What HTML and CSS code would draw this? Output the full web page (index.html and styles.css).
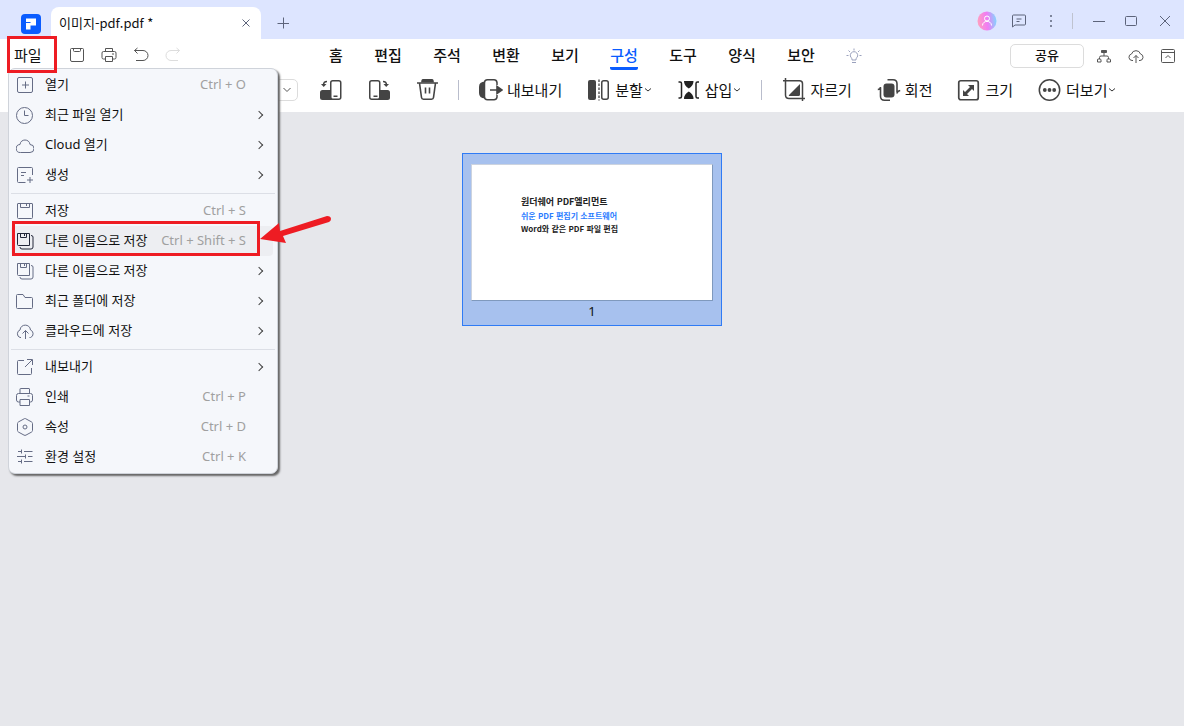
FILE: index.html
```html
<!DOCTYPE html>
<html lang="ko">
<head>
<meta charset="utf-8">
<title>이미지-pdf.pdf</title>
<link rel="stylesheet" href="styles.css">
</head>
<body>
<header class="titlebar">
  <svg class="logo" viewBox="0 0 20 20"><rect width="20" height="20" rx="4" fill="#0a5cff"/><path d="M5 4.500h10v7h-5.500V15.500H5V9h4.500V8H5z" fill="#fff"/></svg>
  <div class="doc-tab">
    <span>이미지-pdf.pdf *</span>
    <button class="plain" aria-label="탭 닫기"><svg width="8" height="8" viewBox="0 0 8 8" class="line"><path d="M.5.5l7 7m0-7l-7 7"/></svg></button>
  </div>
  <button class="plain new-tab" aria-label="새 탭"><svg width="12" height="12" viewBox="0 0 12 12" class="line"><path d="M6.500 .5v11M.5 6.500h12"/></svg></button>
  <div class="window-tools">
    <button class="plain" aria-label="계정"><svg width="20" height="20" viewBox="0 0 20 20"><defs><linearGradient id="av" x1="0" y1=".4" x2="1" y2=".3"><stop offset="0" stop-color="#ff9fc0"/><stop offset=".5" stop-color="#f07cf4"/><stop offset="1" stop-color="#7fd8ff"/></linearGradient></defs><circle cx="10" cy="10" r="9.500" fill="url(#av)"/><g fill="none" stroke="#fff"><circle cx="10" cy="7.500" r="2.500"/><path d="M5.500 14.500c0-5.500 9-5.500 9 0"/></g></svg></button>
    <button class="plain chat" aria-label="의견"><svg width="16" height="14" viewBox="0 0 16 14" class="line"><path d="M1.500 13V2q0-1 1-1h11q1 0 1 1v8q0 1-1 1H4zM5.500 5h5M5.500 7.500h3"/></svg></button>
    <button class="plain" aria-label="메뉴"><svg width="16" height="14" viewBox="0 0 16 14" fill="#5d647b"><circle cx="8" cy="2" r="1"/><circle cx="8" cy="7" r="1"/><circle cx="8" cy="12" r="1"/></svg></button>
    <span class="title-rule"></span>
    <button class="plain" aria-label="최소화"><svg width="12" height="12" viewBox="0 0 12 12" class="line"><path d="M0 6.500h12"/></svg></button>
    <button class="plain" aria-label="최대화"><svg width="12" height="12" viewBox="0 0 12 12" class="line"><rect x=".5" y="1.500" width="11" height="9" rx="1"/></svg></button>
    <button class="plain" aria-label="닫기"><svg width="12" height="12" viewBox="0 0 12 12" class="line"><path d="M1 1l10 10m0-10L1 11"/></svg></button>
  </div>
</header>

<div class="menubar">
  <div class="quick">
    <button class="file">파일</button>
    <button class="plain" aria-label="저장"><svg width="16" height="16" viewBox="0 0 16 16" class="dark"><path d="M2.500 1.500h11q1 0 1 1v10.500q0 1.500-1.500 1.500H3q-1.500 0-1.500-1.500V2.500q0-1 1-1zM4.500 1.500v2q0 1 1 1h5q1 0 1-1v-2"/></svg></button>
    <button class="plain" aria-label="인쇄"><svg width="16" height="16" viewBox="0 0 16 16" class="dark"><path d="M4.500 4.500v-3h7v3M4.500 12H2.500q-1.500 0-1.500-1.500V6q0-1.500 1.500-1.500h11q1.500 0 1.500 1.500v4.500q0 1.500-1.500 1.500h-2M4.500 9.500h7v5h-7zM11 7h2"/></svg></button>
    <button class="plain" aria-label="실행 취소"><svg width="16" height="16" viewBox="0 0 16 16" class="dark"><path d="M4.500 1L1.500 3.500l3 3M1.500 3.500H10a5 5 0 0 1 0 10H3"/></svg></button>
    <button class="plain" aria-label="다시 실행" disabled><svg width="16" height="16" viewBox="0 0 16 16" class="faint"><path d="M11.500 1l3 2.500-3 3M14.500 3.500H6a5 5 0 0 0 0 10h7"/></svg></button>
  </div>
  <nav class="tabs">
    <button>홈</button><button>편집</button><button>주석</button><button>변환</button><button>보기</button><button class="active">구성</button><button>도구</button><button>양식</button><button>보안</button>
    <button class="bulb" aria-label="도움말"><svg width="16" height="16" viewBox="0 0 16 16" fill="none" stroke="#9aa1bd"><path d="M6 12v-1.500a3.700 3.700 0 1 1 4 0V12zM6 14.500h4M8 .5v2M2.500 2.500L4 4M13.500 2.500L12 4M.5 7.500h2M13.500 7.500h2"/></svg></button>
  </nav>
  <div class="share-tools">
    <button class="share">공유</button>
    <button class="plain" aria-label="조직"><svg width="16" height="16" viewBox="0 0 16 16" class="dark"><path d="M5.500 2.500h5v2h-5z" fill="#555"/><path d="M8 5v3M3.500 11V9.500Q3.500 8 5 8h6q1.500 0 1.500 1.500V11M2 11h2q1 0 1 1v2H1.500v-2q0-1 .5-1zM11.500 11h2q1 0 1 1v2H11v-2q0-1 .5-1z"/></svg></button>
    <button class="plain" aria-label="업로드"><svg width="16" height="16" viewBox="0 0 16 16" class="dark"><path d="M5 12.500H4a3.300 3.300 0 0 1-.5-6.500 4.700 4.700 0 0 1 9 0 3.300 3.300 0 0 1-.5 6.500h-1M8 15V7.500M5.500 10L8 7.500 10.500 10"/></svg></button>
    <button class="plain" aria-label="리본 접기"><svg width="16" height="16" viewBox="0 0 16 16" class="dark"><rect x="1.500" y="1.500" width="13" height="13" rx="1"/><path d="M1.500 4.500h13M5.500 10L8 7.500l2.500 2.500"/></svg></button>
  </div>
</div>

<div class="toolbar">
  <button class="range" aria-label="페이지 범위"><svg width="8" height="6" viewBox="0 0 8 6" class="dark"><path d="M.5 1L4 4.500 7.500 1"/></svg></button>
  <button class="tool" aria-label="왼쪽으로 회전"><svg width="24" height="24" viewBox="0 0 24 24"><rect x="1" y="12" width="14" height="10" rx="2.500" fill="#444"/><rect x="11.750" y="2.750" width="10" height="18.500" rx="2" fill="#fff" stroke="#444" stroke-width="1.500"/><path d="M14.500 18.300h4M8 3.500q-3.500 0-3.500 3.500" fill="none" stroke="#444" stroke-width="1.500"/><path d="M2 6h5.500L4.700 9z" fill="#444"/></svg></button>
  <button class="tool" aria-label="오른쪽으로 회전"><svg width="24" height="24" viewBox="0 0 24 24"><rect x="8" y="12" width="14" height="10" rx="2.500" fill="#444"/><rect x="1.750" y="2.750" width="10" height="18.500" rx="2" fill="#fff" stroke="#444" stroke-width="1.500"/><path d="M5.500 18.300h4M15 3.500q3.500 0 3.500 3.500" fill="none" stroke="#444" stroke-width="1.500"/><path d="M15.500 6H21l-2.800 3z" fill="#444"/></svg></button>
  <button class="tool trash" aria-label="삭제"><svg width="24" height="24" viewBox="0 0 24 24"><path d="M4.500 2q.5-1 1.500-1h9q1 0 1.500 1l.5 2.500H4z" fill="#444"/><path d="M0 5h21M2.500 5l2 14.500q.2 1.700 2 1.700h8q1.800 0 2-1.700l2-14.500M8.500 9.500v6M12.500 9.500v6" fill="none" stroke="#444" stroke-width="1.600"/></svg></button>
  <span class="rule"></span>
  <button class="tool"><svg width="24" height="24" viewBox="0 0 24 24"><path d="M6 3.500v17Q0 20 0 15V8.500Q0 4 6 3.500z" fill="#444"/><path d="M18 7V4.500Q17.500 1.800 15 1.800H8.500q-3 0-3 3v14q0 3 3 3H15q2.500 0 3-2.700V17" fill="none" stroke="#444" stroke-width="1.500"/><path d="M11 12h10M18 8.500l5 3.500-5 3.500z" fill="#444" stroke="#444" stroke-width="1.600"/></svg>내보내기</button>
  <button class="tool"><svg width="24" height="24" viewBox="0 0 24 24"><rect x="1" y="2" width="8" height="20" rx="2" fill="#444"/><rect x="14.750" y="2.750" width="6.500" height="18.500" rx="2" fill="none" stroke="#444" stroke-width="1.500"/><path d="M12 1.500v21" stroke="#444" stroke-width="1.300" stroke-dasharray="2.500 1.500"/></svg>분할<svg class="chev" width="8" height="6" viewBox="0 0 8 6"><path d="M1 1.500l3 2.500 3-2.500"/></svg></button>
  <button class="tool"><svg width="24" height="24" viewBox="0 0 24 24"><path d="M1.500 4H3q1.500 0 1.500 1.500v13Q4.500 20 3 20H1.500M22 4h-1.500Q19 4 19 5.500v13q0 1.500 1.500 1.500H22" fill="none" stroke="#222" stroke-width="1.500"/><path d="M7 3h9.500q0 5-4.700 7.500Q7 8 7 3zM7 21h9.500q0-5-4.700-7.500Q7 16 7 21z" fill="#222"/></svg>삽입<svg class="chev" width="8" height="6" viewBox="0 0 8 6"><path d="M1 1.500l3 2.500 3-2.500"/></svg></button>
  <span class="rule"></span>
  <button class="tool"><svg width="24" height="24" viewBox="0 0 24 24"><path d="M1 2.800h16.500q3 0 3 3V23M3.500 0v17q0 3.500 3.500 3.500h16" fill="none" stroke="#444" stroke-width="1.500"/><path d="M18 6v10.500q0 1.500-1.500 1.500h-9Q6 18 7.500 16.500z" fill="#444"/></svg>자르기</button>
  <button class="tool"><svg width="24" height="24" viewBox="0 0 24 24"><rect x="6.500" y="5.500" width="11" height="14" rx="3" fill="#444"/><path d="M10.500 1.800H16q4 0 4 4V14M13 22.200H7.500q-4 0-4-4V10M.8 11.500q2.700 0 2.700-2.500M23.200 12.500q-3 .5-3.200 3" fill="none" stroke="#444" stroke-width="1.600"/></svg>회전</button>
  <button class="tool"><svg width="24" height="24" viewBox="0 0 24 24"><rect x="1.750" y="2.750" width="19.500" height="19" rx="2" fill="none" stroke="#444" stroke-width="1.700"/><path d="M11 7h6v6l-2-2-5 5 2 2H6v-6l2 2 5-5z" fill="#444"/></svg>크기</button>
  <button class="tool"><svg width="24" height="24" viewBox="0 0 24 24"><circle cx="11.500" cy="12" r="10.200" fill="none" stroke="#444" stroke-width="1.500"/><g fill="#444"><circle cx="6.800" cy="12" r="1.900"/><circle cx="11.500" cy="12" r="1.900"/><circle cx="16.200" cy="12" r="1.900"/></g></svg>더보기<svg class="chev" width="8" height="6" viewBox="0 0 8 6"><path d="M1 1.500l3 2.500 3-2.500"/></svg></button>
</div>

<main class="canvas">
  <figure class="thumb">
    <div class="page">
      <p class="heading">원더쉐어 PDF엘리먼트</p>
      <p class="blue">쉬운 PDF 편집기 소프트웨어</p>
      <p>Word와 같은 PDF 파일 편집</p>
    </div>
    <figcaption>1</figcaption>
  </figure>
</main>

<div class="file-menu" role="menu">
  <button class="item"><svg viewBox="0 0 18 18"><rect x="1.500" y="1.500" width="15" height="15" rx="1.500"/><path d="M9.500 5.500v7M6 9h7"/></svg><span>열기</span><kbd>Ctrl + O</kbd></button>
  <button class="item"><svg viewBox="0 0 18 18"><circle cx="8.500" cy="9.500" r="8"/><path d="M8.500 4.500v5h4"/></svg><span>최근 파일 열기</span><i class="more"></i></button>
  <button class="item"><svg viewBox="0 0 18 18"><path d="M4.500 16.500a4 4 0 0 1-.5-8c.5-6 9.500-6 10 0a4 4 0 0 1 0 8z"/></svg><span>Cloud 열기</span><i class="more"></i></button>
  <button class="item"><svg viewBox="0 0 18 18"><path d="M9.500 16.500H2.500q-1 0-1-1v-13q0-1 1-1h13q1 0 1 1V9M5 6.500h5M5 9.500h3M14 11v6M11 14h6"/></svg><span>생성</span><i class="more"></i></button>
  <hr>
  <button class="item"><svg viewBox="0 0 18 18"><path d="M2 1.500h14q.5 0 .5.500v13.500q0 1-1 1h-13q-1 0-1-1V2q0-.5.500-.5zM4.500 1.500v4h9v-4M10.500 2v2"/></svg><span>저장</span><kbd>Ctrl + S</kbd></button>
  <button class="item current"><svg viewBox="0 0 18 18"><path d="M1.500 1.500h12v12h-11q-1 0-1-1zM4.500 1.500v4h6v-4M8.500 2v2M15 3.500q2 0 2 1.500v10q0 2-2 2H6q-2 0-2-2"/></svg><span>다른 이름으로 저장</span><kbd>Ctrl + Shift + S</kbd></button>
  <button class="item"><svg viewBox="0 0 18 18"><path d="M1.500 1.500h12v12h-11q-1 0-1-1zM4.500 1.500v4h6v-4M8.500 2v2M15 3.500q2 0 2 1.500v10q0 2-2 2H6q-2 0-2-2"/></svg><span>다른 이름으로 저장</span><i class="more"></i></button>
  <button class="item"><svg viewBox="0 0 18 18"><path d="M1.500 16.500q-1 0-1-1v-12q0-1 1-1H7l2 3h6.500q1 0 1 1v9q0 1-1 1z"/></svg><span>최근 폴더에 저장</span><i class="more"></i></button>
  <button class="item"><svg viewBox="0 0 18 18"><path d="M5 15.500H4a4 4 0 0 1 0-7.500c.5-6.500 10-6.500 10.500 0a4 4 0 0 1 0 7.500h-1M9.500 17V8.500M6.500 11.500l3-3 3 3"/></svg><span>클라우드에 저장</span><i class="more"></i></button>
  <hr>
  <button class="item"><svg viewBox="0 0 18 18"><path d="M8 2.500H2.500q-1 0-1 1v12q0 1 1 1h12q1 0 1-1V10M11 1.500h5.500V7M16 2L9 9"/></svg><span>내보내기</span><i class="more"></i></button>
  <button class="item"><svg viewBox="0 0 18 18"><path d="M4 5.500V1q0-.5.500-.5h8.500q.5 0 .5.500v4.500M4 14H2.500Q.5 14 .5 12V7.500q0-2 2-2h12q2 0 2 2V12q0 2-2 2h-1M4 11.500h9.500v6H4zM11.500 8h2"/></svg><span>인쇄</span><kbd>Ctrl + P</kbd></button>
  <button class="item"><svg viewBox="0 0 18 18"><path d="M9 .5q.5 0 1 .4l5.500 3q1 .6 1 1.600v7q0 1-1 1.600l-5.500 3q-1 .6-2 0l-5.500-3q-1-.6-1-1.600v-7q0-1 1-1.600l5.500-3q.5-.4 1-.4z"/><circle cx="9" cy="9" r="2"/></svg><span>속성</span><kbd>Ctrl + D</kbd></button>
  <button class="item"><svg viewBox="0 0 18 18"><path d="M2 3.500h3.500M5.500 1.500v4M8 3.500h8.500M1 8.500h8M9.500 6.500v4M12 8.500h4.500M2 13.500h3.500M5.500 11.500v4M8 13.500h8.500"/></svg><span>환경 설정</span><kbd>Ctrl + K</kbd></button>
</div>

<div class="mark mark-file"></div>
<div class="mark mark-save"></div>
<svg class="arrow" viewBox="0 0 72 32" fill="#ee1c23"><path d="M0 25L19 9l1 8 47-15q4 0 4 3 0 2-2 3L23 22l3 7z"/></svg>
</body>
</html>
```
FILE: styles.css
```css
* { box-sizing: border-box; }
body {
  margin: 0;
  min-height: 100vh;
  display: flex;
  flex-direction: column;
  background: #e6e7eb;
  color: #111;
  font-family: "Noto Sans", "Noto Sans CJK KR", sans-serif;
  font-size: 13px;
}
button {
  font: inherit;
  color: inherit;
  background: none;
  border: 0;
  padding: 0;
  white-space: nowrap;
}
svg { display: block; flex: none; }
.plain { display: flex; align-items: center; justify-content: center; }
.line { fill: none; stroke: #5d647b; }
.dark { fill: none; stroke: #555; }
.faint { fill: none; stroke: #ddd; }

.titlebar {
  display: flex;
  align-items: center;
  height: 39px;
  padding: 0 13px 0 21px;
  background: #dde5ff;
}
.logo { width: 20px; height: 20px; margin: 9px 10px 0 0; }
.doc-tab {
  display: flex;
  align-items: center;
  justify-content: space-between;
  align-self: flex-end;
  width: 210px;
  height: 32px;
  padding: 0 11px 0 8px;
  border-radius: 8px 8px 0 0;
  background: #fff;
  font-family: "Noto Sans CJK KR", sans-serif;
}
.doc-tab span { padding-bottom: 1px; }
.new-tab { margin: 6px 0 0 16px; }
.window-tools { display: flex; align-items: center; margin: 2px 0 0 auto; }
.chat { margin: 0 16px 0 14px; }
.title-rule { width: 1px; height: 16px; margin: 0 20px 0 13px; background: #bfc3d0; }
.title-rule ~ .plain + .plain { margin-left: 20px; }
.title-rule ~ .plain + .plain + .plain { margin-left: 22px; }

.menubar {
  display: flex;
  align-items: center;
  height: 33px;
  padding: 0 8px 0 14px;
  background: #fff;
}
.quick { display: flex; align-items: center; gap: 16px; flex: 0 0 315px; }
.quick .plain { padding-bottom: 1px; }
.file { margin-right: 11px; padding-bottom: 2px; font-size: 15px; }
.tabs { display: flex; gap: 31px; height: 100%; font-size: 15px; font-weight: 500; }
.tabs button { min-width: 14px; height: 31px; padding-top: 2px; border-bottom: 3px solid transparent; }
.tabs button + button { min-width: 28px; }
.tabs .active { color: #0a5cff; border-color: #0a5cff; border-radius: 2px; }
.tabs .bulb { display: flex; align-items: center; justify-content: center; margin-left: -6px; padding-top: 6px; }
.share-tools { display: flex; align-items: center; gap: 16px; margin-left: auto; }
.share {
  width: 74px;
  height: 24px;
  margin-right: -4px;
  padding-bottom: 2px;
  border: 1px solid #dcdcdc;
  border-radius: 5px;
  font-weight: 500;
  line-height: 20px;
}

.toolbar {
  display: flex;
  align-items: center;
  gap: 25px;
  height: 40px;
  padding: 0 8px 4px 170px;
  background: #fff;
  font-size: 15px;
}
.range {
  display: flex;
  align-items: center;
  justify-content: flex-end;
  width: 128px;
  height: 22px;
  margin-right: -4px;
  padding-right: 6px;
  border: 1px solid #dcdcdc;
  border-radius: 5px;
}
.tool { display: flex; align-items: center; gap: 4px; line-height: 22px; }
.trash { margin-right: -8px; }
.rule { width: 1px; height: 20px; margin: 0 -5px; background: #b9bdcc; }
.trash + .rule { margin-left: 0; }
.chev { margin-left: -3px; fill: none; stroke: #333; }

.canvas { flex: 1; padding-top: 41px; }
.thumb {
  width: 260px;
  margin: 0 auto;
  padding: 10px 8px 3px;
  border: 1px solid #2f7bf5;
  background: #a7c1ee;
}
.page {
  height: 137px;
  padding: 29px 0 0 49px;
  border: 1px solid #7f99bd;
  border-top-color: #ccd3df;
  border-left-color: #ccd3df;
  background: #fff;
  color: #222;
  font-family: "Noto Sans CJK KR", sans-serif;
  font-size: 8px;
  font-weight: 700;
}
.page p { margin: 0; line-height: 13px; }
.page .heading { font-size: 9px; line-height: 15px; }
.page .blue { color: #2b7cff; }
.thumb figcaption { font-size: 13px; line-height: 21px; text-align: center; }

.file-menu {
  position: absolute;
  left: 8px;
  top: 68px;
  width: 270px;
  padding: 1px 2px;
  border: 1px solid #cfd3da;
  border-radius: 7px;
  background: #f5f7fb;
  box-shadow: 2px 2px 2px #666;
}
.item {
  display: flex;
  align-items: center;
  width: 262px;
  height: 30px;
  padding: 0 9px 0 5px;
  border-radius: 4px;
  text-align: left;
}
.item svg { width: 18px; height: 18px; margin-right: 11px; fill: none; stroke: #656c85; }
.item span { flex: 1; line-height: 28px; padding-bottom: 2px; }
.item kbd { margin-right: 18px; padding-bottom: 2px; font: inherit; color: #a0a0a0; }
.current { background: #edeef2; }
.current svg { stroke: #222639; }
.more {
  width: 6px;
  height: 6px;
  margin-right: 2px;
  border: solid #444;
  border-width: 1px 1px 0 0;
  transform: rotate(45deg);
}
.file-menu hr { height: 1px; margin: 3px 0 2px; border: 0; background: #dcdfe6; }

.mark { position: absolute; border: 3px solid #ee1c23; }
.mark-file { left: 7px; top: 36px; width: 50px; height: 37px; }
.mark-save { left: 12px; top: 221px; width: 248px; height: 35px; }
.arrow { position: absolute; left: 260px; top: 214px; width: 72px; height: 32px; }
```
